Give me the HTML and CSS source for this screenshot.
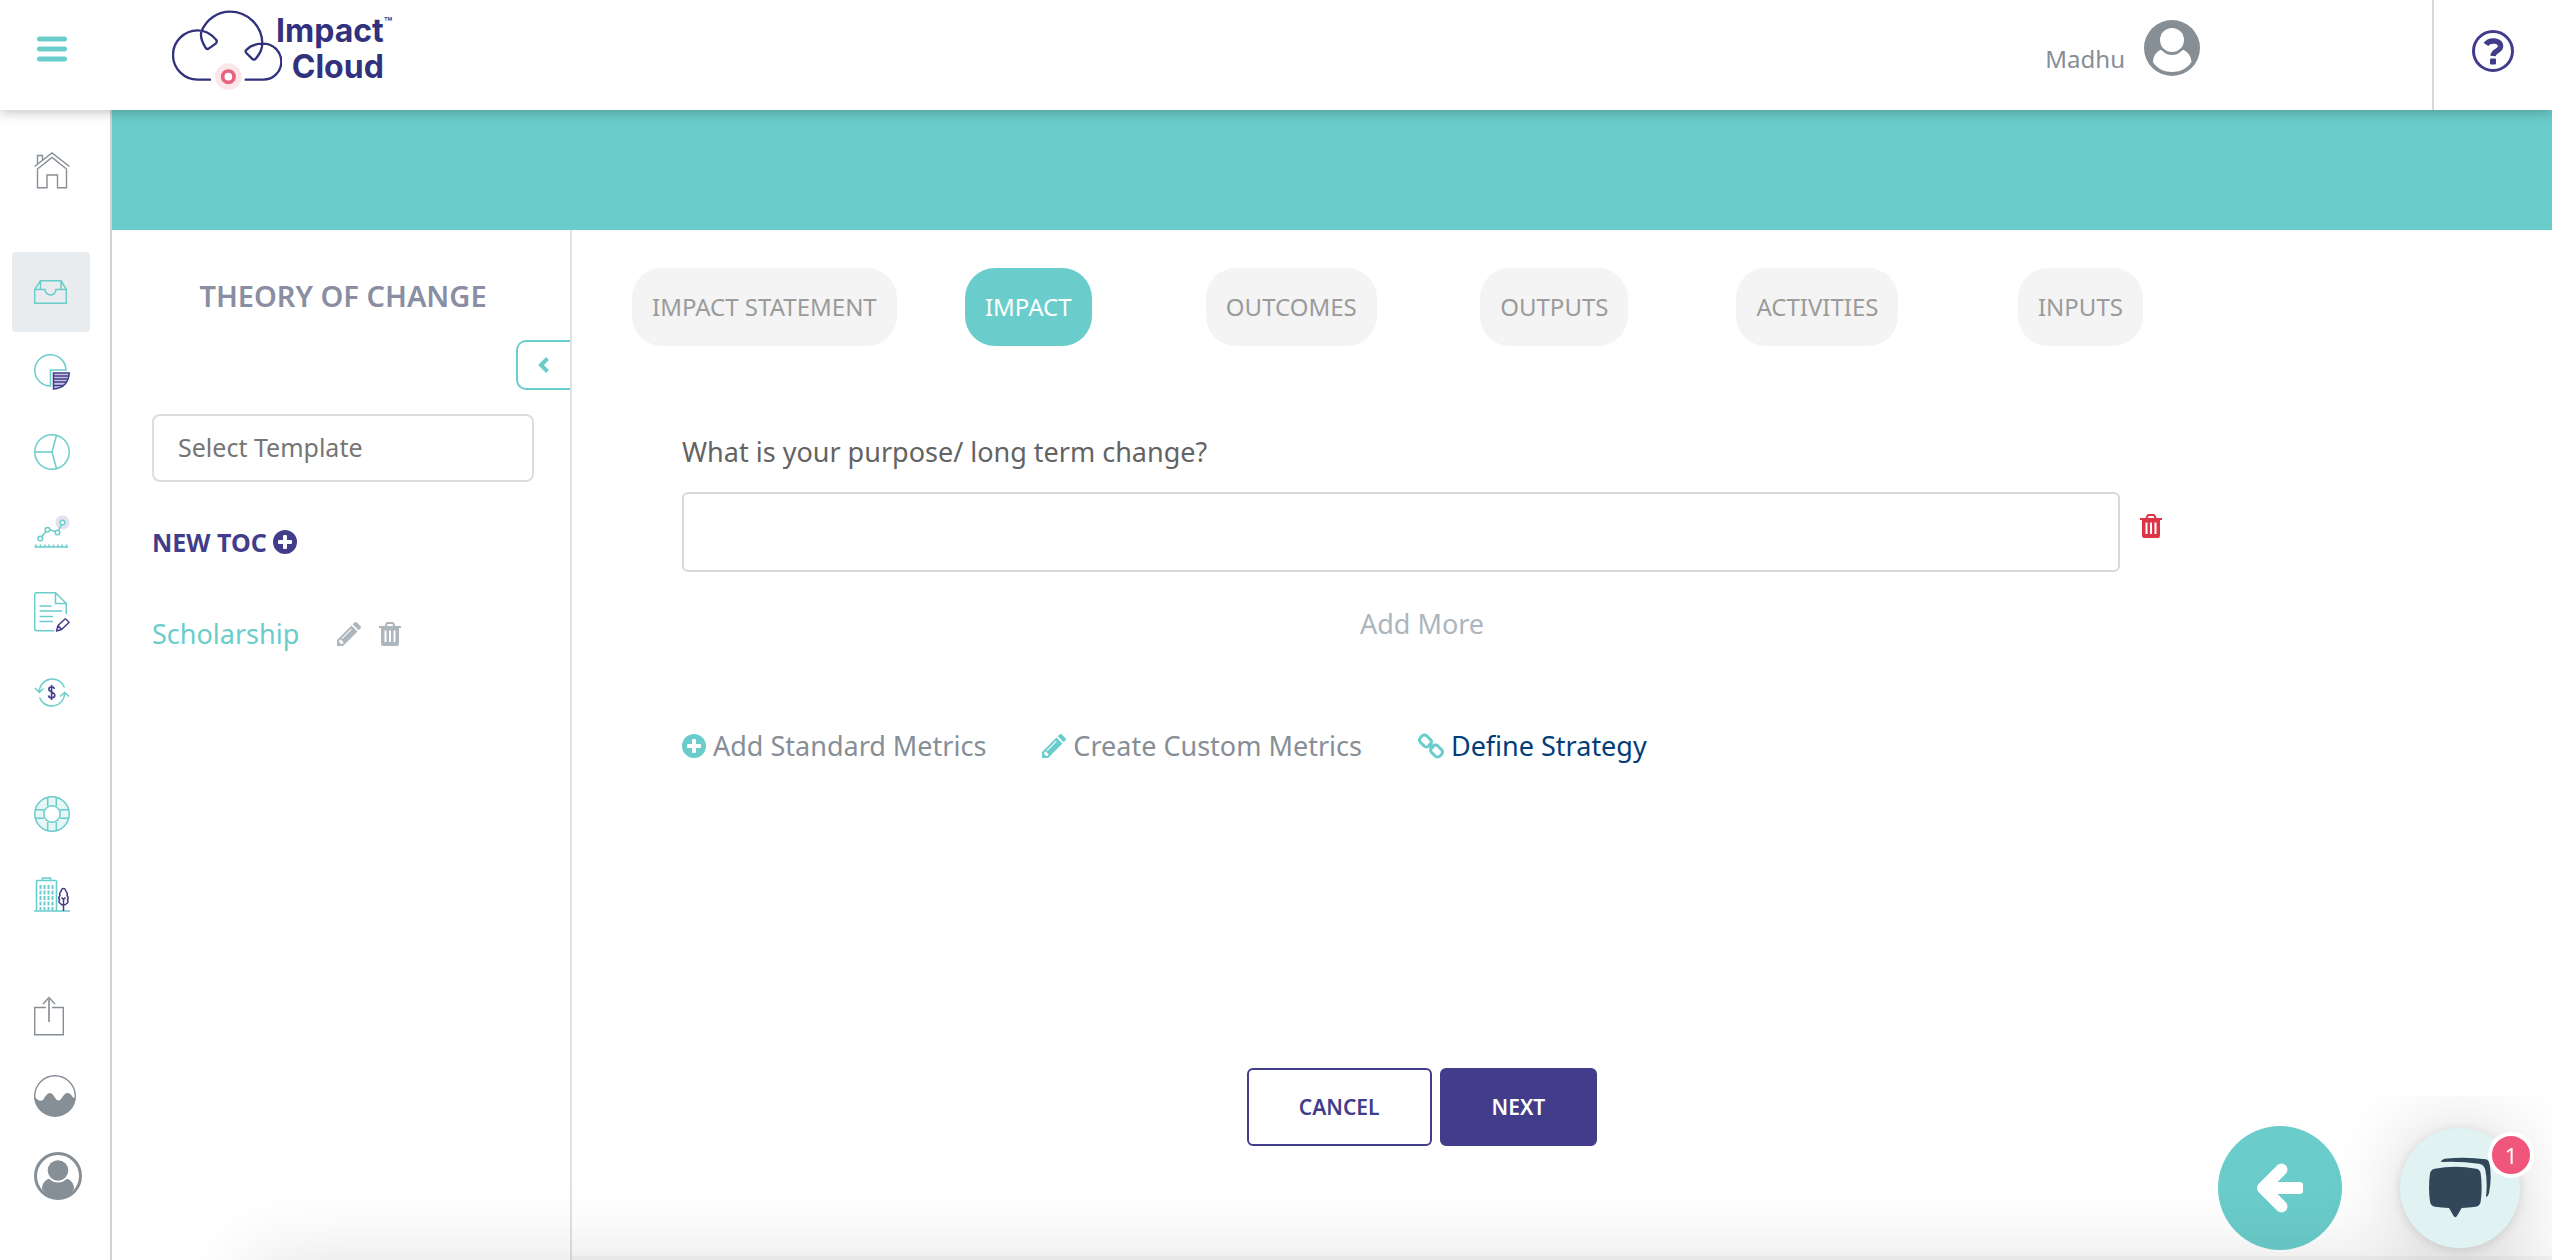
FILE: index.html
```html
<!DOCTYPE html>
<html lang="en">
<head>
<meta charset="utf-8">
<meta name="viewport" content="width=device-width, initial-scale=1">
<title>Impact Cloud - Theory of Change</title>
<link rel="stylesheet" href="styles.css">
</head>
<body>
<svg class="sprite" aria-hidden="true">
  <symbol id="plus-circle" viewBox="0 0 24 24"><path fill="currentColor" fill-rule="evenodd" d="M12 0a12 12 0 1 0 0 24a12 12 0 1 0 0-24zM11 5h2a1 1 0 0 1 1 1v4h4a1 1 0 0 1 1 1v2a1 1 0 0 1-1 1h-4v4a1 1 0 0 1-1 1h-2a1 1 0 0 1-1-1v-4H6a1 1 0 0 1-1-1v-2a1 1 0 0 1 1-1h4V6a1 1 0 0 1 1-1z"/></symbol>
  <symbol id="pencil" viewBox="0 0 24 24"><path fill="currentColor" fill-rule="evenodd" d="M0 24v-6L14.500 3.500l6 6L6 24zM2 19v1.500h1.500V22H5.200l1.500-1.500l-3.200-3.200zM4.600 16.200l.7.7l9.400-9.400l-.7-.7z"/><path fill="currentColor" d="M15.700 2.300L17.500.6q1.200-1.200 2.400 0L23.400 4.100q1.200 1.200 0 2.400L21.700 8.300z"/></symbol>
  <symbol id="trash" viewBox="0 0 22 24"><path fill="currentColor" fill-rule="evenodd" d="M0 4h5.500l1.200-2.700Q7.300 0 8.700 0h4.600q1.400 0 2 1.300L16.500 4H22v2h-2v15.500q0 2.500-2 2.500H4q-2 0-2-2.500V6H0zM7.600 4h6.800l-.9-1.700q-.2-.3-.6-.3H9.100q-.4 0-.6.3zM5.500 8.500v11.500h2V8.500zM10 8.500v11.500h2V8.500zM14.500 8.500v11.500h2V8.500z"/></symbol>
</svg>

<header class="topbar">
  <div class="menu-cell">
    <button class="icon-btn" aria-label="Toggle menu">
      <svg width="30" height="26" viewBox="0 0 30 26"><path d="M2.500 3h25M2.500 13h25M2.500 23h25" stroke="#6acdcb" stroke-width="5" stroke-linecap="round"/></svg>
    </button>
  </div>
  <a class="logo" href="#" aria-label="Impact Cloud home">
    <svg width="110" height="80" viewBox="516 30 330 240" fill="none">
      <path d="M630 239H593A74 74 0 0 1 593 91C616 91 635 103 649 120Q652 124 648 130L626 146Q620 149 616 142C606 126 600 112 604 95C620 55 655 35 690 35A97 97 0 0 1 787 130C787 150 778 164 767 176Q762 182 756 176L739 159Q734 153 740 149C752 136 770 131 790 131A54 54 0 0 1 790 239H737" stroke="#31317d" stroke-width="7" stroke-linecap="round" stroke-linejoin="round"/>
      <circle cx="685" cy="230" r="40" fill="#fbe6ea"/>
      <circle cx="685" cy="230" r="17" fill="#fff" stroke="#e8637f" stroke-width="11"/>
    </svg>
    <span class="logo-name">Impact<br>Cloud</span><span class="logo-tm">™</span>
  </a>
  <a class="user" href="#">
    <span>Madhu</span>
    <svg width="56" height="56" viewBox="0 0 56 56">
      <circle cx="28" cy="28" r="28" fill="#868e96"/>
      <path d="M9 42Q9 34 16 30H40Q47 34 47.500 42C43 49 35 52 28 52S13 49 9 42z" fill="#fff"/>
      <ellipse cx="28" cy="20.500" rx="14" ry="14.500" fill="#868e96"/>
      <circle cx="28" cy="20" r="12" fill="#fff"/>
    </svg>
  </a>
  <div class="help-cell">
    <button class="icon-btn" aria-label="Help">
      <svg width="42" height="42" viewBox="0 0 42 42"><circle cx="21" cy="21" r="19.500" fill="none" stroke="#423d8b" stroke-width="3"/><path d="M14 14.500C17 9.500 29 9.500 28.500 16.500C28 21.500 21.500 20.500 21 26" fill="none" stroke="#423d8b" stroke-width="5.500"/><rect x="18" y="28.500" width="6" height="6" rx="1" fill="#423d8b"/></svg>
    </button>
  </div>
</header>

<div class="shell">
  <nav class="rail" aria-label="Main">
    <div class="rail-group">
      <a class="rail-item" href="#" aria-label="Home"><svg width="36" height="37" viewBox="0 0 36 37" fill="none" stroke="#868e96" stroke-width="1.400"><path d="M.5 14.500L18 1L35.500 14.500M3.500 17v18.800H13V23h10.500v12.800h9V17L18 5.500zM3.500 12V3.500H8.500V8"/></svg></a>
    </div>
    <div class="rail-group">
      <a class="rail-item is-active" href="#" aria-label="Theory of Change"><svg width="33" height="24" viewBox="0 0 33 24" fill="none" stroke="#6acdcb" stroke-width="1.500"><path d="M.7 9.500V23.300H32.300V9.500L27 .7H6.500L.7 9.500H11A5.500 5.500 0 0 0 22 9.500H32.300M6.500.7V9.500M27 .7V9.500"/></svg></a>
      <a class="rail-item" href="#" aria-label="Metrics"><svg width="36" height="36" viewBox="0 0 36 36" fill="none"><path d="M32 16A15.600 15.600 0 1 0 16.500 32V16z" stroke="#6acdcb" stroke-width="1.500"/><path d="M19.500 19H35.300Q34 34 19.500 35z" fill="#c9c6e2" stroke="#423d8b" stroke-width="1.500"/><path d="M19.500 22H35M19.500 25H34M19.500 28H33M19.500 31.500H30" stroke="#423d8b" stroke-width="1.300"/></svg></a>
      <a class="rail-item" href="#" aria-label="Segments"><svg width="36" height="36" viewBox="0 0 36 36" fill="none" stroke="#6acdcb" stroke-width="1.500"><circle cx="18" cy="18" r="17.200"/><path d="M.8 18H18L22.500 1.500M18 18L22.500 34.500"/></svg></a>
      <a class="rail-item" href="#" aria-label="Trends"><svg width="36" height="34" viewBox="0 0 36 34" fill="none"><circle cx="28.500" cy="7.500" r="7" fill="#e3e1ee"/><path d="M7.800 21.500L12 16.500M15.500 14.800L21 16.500M24.500 15.500L27.500 9.500M.5 32H34M2 29.500V32M6.500 29.500V32M11 29.500V32M15 29.500V32M19.500 29.500V32M24 29.500V32M28 29.500V32M32.500 29.500V32" stroke="#6acdcb" stroke-width="1.500"/><g stroke="#6acdcb" stroke-width="1.500" fill="#fff"><circle cx="6.300" cy="23.500" r="2.300"/><circle cx="13.500" cy="14.800" r="2.300"/><circle cx="23.500" cy="17.500" r="2.300"/><circle cx="28.500" cy="7.500" r="2.300"/></g></svg></a>
      <a class="rail-item" href="#" aria-label="Reports"><svg width="36" height="40" viewBox="0 0 36 40" fill="none"><path d="M20 38.700H3Q.7 38.700.7 36.500V3Q.7.7 3 .7H21.500L32.300 11.500V22M21.500.7V11.500H32.300M5.500 14H17.500M5.500 19H28M5.500 24.500H19M5.500 29.500H19" stroke="#6acdcb" stroke-width="1.500"/><path d="M22.500 39L24 33.500L31 27Q32 26.500 35 30.500L27.500 37.500zM24 33.500L27.500 37.500" stroke="#423d8b" stroke-width="1.500" stroke-linejoin="round"/></svg></a>
      <a class="rail-item" href="#" aria-label="Funding"><svg width="36" height="29" viewBox="0 0 36 29" fill="none"><path d="M5.300 14A13 13 0 0 1 30.500 9.500M1 10L5.300 14.500L9.500 10.500M5.500 19.500A13 13 0 0 0 30.700 15.500M26 18.500L30.700 14.500L35 18.500" stroke="#6acdcb" stroke-width="1.500"/><path d="M20.500 10.800C20 8.300 14.800 8.500 14.800 11.300C14.800 14.800 20.800 13.500 20.800 17.300C20.800 20.500 15 20.500 14.500 17.500M17.600 7V22" stroke="#423d8b" stroke-width="1.600"/></svg></a>
    </div>
    <div class="rail-group">
      <a class="rail-item" href="#" aria-label="Support"><svg width="36" height="36" viewBox="0 0 36 36" fill="none" stroke="#6acdcb" stroke-width="1.500"><circle cx="18" cy="18" r="12.500" stroke="#e5f6f5" stroke-width="9"/><path d="M13.700 1v9M22.300 1v9M13.700 26v9M22.300 26v9M1 13.700h9M1 22.300h9M26 13.700h9M26 22.300h9"/><circle cx="18" cy="18" r="17.200"/><circle cx="18" cy="18" r="8.200" fill="#fff"/></svg></a>
      <a class="rail-item" href="#" aria-label="Organization"><svg width="36" height="35" viewBox="0 0 36 35" fill="none"><path d="M2.500 34V4.500Q2.500 3.500 3.500 3.500H21.500Q22.500 3.500 22.500 4.500V34M8.500 3.500V1H16.500V3.500M0 34H36" stroke="#6acdcb" stroke-width="1.600"/><path d="M6.500 8V33M10.500 8V33M14.500 8V33M18.500 8V33" stroke="#6acdcb" stroke-width="2" stroke-dasharray="4 1.500"/><path d="M29.500 34V22M27.500 20.500L29.500 22.500L31.500 20.500M29.500 27.500Q27.500 28.500 26.500 26.500Q24 25.500 25.500 23Q24 20.500 26 18.500Q25 16 27 14.500Q27.500 11.500 29.500 11.500Q31.500 11.500 32 14.500Q34 16 33 18.500Q35 20.500 33.500 23Q35 25.500 32.500 26.500Q31.500 28.500 29.500 27.500z" stroke="#423d8b" stroke-width="1.500"/></svg></a>
    </div>
    <div class="rail-group">
      <a class="rail-item" href="#" aria-label="Share"><svg width="30" height="40" viewBox="0 0 30 40" fill="none" stroke="#868e96"><path d="M12 11.500H.7V38.800H29.300V11.500H18M9 8L15 1.500L21 8" stroke-width="1.400"/><path d="M15 2V26" stroke="#9aa1a8" stroke-width="2"/></svg></a>
      <a class="rail-item" href="#" aria-label="Landscape"><svg width="42" height="42" viewBox="0 0 42 42"><circle cx="21" cy="21" r="20.300" fill="none" stroke="#868e96" stroke-width="1.400"/><path d="M.5 21.500Q5 27.500 9 25Q13 18 15.500 18Q18.500 18 20.500 22Q24.500 29 28.500 22Q31 18 33.500 18Q36.500 18 38.500 22L41.500 23.500A20.700 20.700 0 0 1 .5 23z" fill="#868e96"/></svg></a>
      <a class="rail-item" href="#" aria-label="Account"><svg width="48" height="48" viewBox="0 0 48 48"><circle cx="24" cy="24" r="22.500" fill="#fff" stroke="#868e96" stroke-width="3"/><path d="M8 37Q8 30 14 27H34Q40 30 40 37Q34 47 24 47T8 37z" fill="#868e96"/><circle cx="24" cy="18.500" r="12" fill="#fff"/><circle cx="24" cy="18.500" r="10.300" fill="#868e96"/></svg></a>
    </div>
  </nav>

  <div class="page">
    <div class="banner"></div>
    <div class="columns">
      <aside class="panel">
        <h1 class="panel-title">THEORY OF CHANGE</h1>
        <button class="collapse" aria-label="Collapse panel">
          <svg width="12" height="18" viewBox="0 0 12 18"><path d="M9.500 2.500L3 9L9.500 15.500" fill="none" stroke="#6acdcb" stroke-width="4"/></svg>
        </button>
        <input class="template" type="text" placeholder="Select Template" aria-label="Select Template">
        <button class="new-toc">NEW TOC <svg width="24" height="24"><use href="#plus-circle"/></svg></button>
        <div class="toc-row">
          <a class="toc-link" href="#">Scholarship</a>
          <button class="icon-btn" aria-label="Edit Scholarship"><svg width="24" height="24"><use href="#pencil"/></svg></button>
          <button class="icon-btn" aria-label="Delete Scholarship"><svg width="22" height="24"><use href="#trash"/></svg></button>
        </div>
      </aside>

      <main class="main">
        <nav class="tabs" aria-label="Steps">
          <a class="tab" href="#">IMPACT STATEMENT</a>
          <a class="tab is-current" href="#" aria-current="step">IMPACT</a>
          <a class="tab" href="#">OUTCOMES</a>
          <a class="tab" href="#">OUTPUTS</a>
          <a class="tab" href="#">ACTIVITIES</a>
          <a class="tab" href="#">INPUTS</a>
        </nav>
        <form class="form">
          <label class="question" for="purpose">What is your purpose/ long term change?</label>
          <div class="field-row">
            <input class="field" id="purpose" type="text">
            <button class="icon-btn delete" type="button" aria-label="Delete"><svg width="22" height="24"><use href="#trash"/></svg></button>
          </div>
          <button class="add-more" type="button">Add More</button>
          <div class="metrics">
            <a class="metric" href="#"><svg width="24" height="24"><use href="#plus-circle"/></svg>Add Standard Metrics</a>
            <a class="metric" href="#"><svg width="24" height="24"><use href="#pencil"/></svg>Create Custom Metrics</a>
            <a class="metric is-strong" href="#"><svg width="26" height="26" viewBox="0 0 26 26" fill="none" stroke="currentColor" stroke-width="3"><rect x="1.500" y="3.500" width="12" height="9" rx="3.500" transform="rotate(45 7.500 8)"/><rect x="12.500" y="13.500" width="12" height="9" rx="3.500" transform="rotate(45 18.500 18)"/><path d="M10.500 10.500L15.500 15.500"/></svg>Define Strategy</a>
          </div>
          <div class="actions">
            <button class="btn btn-outline" type="button">CANCEL</button>
            <button class="btn btn-solid" type="button">NEXT</button>
          </div>
        </form>
      </main>
    </div>
  </div>
</div>

<button class="back" aria-label="Back">
  <svg width="46" height="50" viewBox="0 0 46 50" fill="none" stroke="#fff" stroke-linecap="round" stroke-linejoin="round"><path d="M24.500 6.500L6 25L24.500 43.500" stroke-width="12"/><path d="M9 25H42" stroke-width="8"/><rect x="12" y="21" width="32" height="8" rx="1" fill="#fff" stroke-width="4"/></svg>
</button>
<div class="bottom-shade"></div>
<div class="chat-area">
  <button class="chat" aria-label="Open chat">
    <svg width="64" height="62" viewBox="745 288 192 186" fill="#33475b"><path d="M765 326Q827 314 890 326Q901 328 903 340Q909 382 903 425Q900 438 888 440Q868 443 846 444L832 468Q827 475 822 468L808 444Q785 443 766 440Q754 438 751 425Q745 382 751 340Q754 328 765 326z"/><path d="M783 306Q786 298 795 296Q860 289 918 298Q928 300 930 312Q937 355 928 400Q926 409 919 411Q924 365 917 330Q914 314 898 311Q840 303 783 306z"/></svg>
    <span class="chat-count">1</span>
  </button>
</div>
</body>
</html>
```
FILE: styles.css
```css
:root {
  --teal: #6acdcb;
  --indigo: #423d8b;
  --grey: #868e96;
  --light-grey: #adb5bd;
  --top-height: 110px;
}

* { box-sizing: border-box; }

body {
  margin: 0;
  background: #fff;
  color: #636363;
  font: 27px/40px "Noto Sans", sans-serif;
}

a { color: inherit; text-decoration: none; }
svg { display: block; flex: none; }
button { font: inherit; cursor: pointer; }
.sprite { position: absolute; width: 0; height: 0; }

.icon-btn {
  padding: 0;
  border: 0;
  background: none;
  color: var(--light-grey);
}

/* Top bar */
.topbar {
  position: relative;
  z-index: 2;
  display: flex;
  height: var(--top-height);
  background: #fff;
  box-shadow: 0 2px 12px rgba(0, 0, 0, .25);
}

.menu-cell {
  display: flex;
  align-items: flex-start;
  width: 172px;
  padding: 36px 0 0 37px;
}

.logo {
  display: flex;
  align-items: flex-start;
  padding-top: 10px;
  color: #31317d;
}

.logo-name {
  margin: 3px 0 0 -6px;
  font: 700 32px/36px Inter, sans-serif;
  text-align: right;
}

.logo-tm {
  margin-top: 5px;
  font: 500 14px/16px Inter, sans-serif;
}

.user {
  display: flex;
  align-items: flex-start;
  gap: 19px;
  margin: 20px 232px 0 auto;
  color: var(--grey);
  font-size: 24px;
}

.user span { margin-top: 19px; }

.help-cell {
  display: flex;
  align-items: flex-start;
  width: 120px;
  padding: 30px 0 0 38px;
  border-left: 2px solid #d8d8d8;
}

/* Shell */
.shell {
  display: flex;
  min-height: calc(100vh - var(--top-height));
}

.rail {
  flex: none;
  display: flex;
  flex-direction: column;
  gap: 42px;
  width: 112px;
  padding: 20px 20px 40px 12px;
  border-right: 2px solid #ced4da;
}

.rail-item {
  display: flex;
  align-items: center;
  height: 80px;
  padding-left: 22px;
  border-radius: 4px;
}

.rail-item.is-active { background: #e9ecef; }

.page {
  flex: 1;
  display: flex;
  flex-direction: column;
}

.banner {
  height: 120px;
  background: var(--teal);
}

.columns {
  flex: 1;
  display: flex;
}

/* Side panel */
.panel {
  flex: none;
  display: flex;
  flex-direction: column;
  align-items: flex-start;
  width: 460px;
  padding: 46px 36px 0 40px;
  border-right: 2px solid #dee2e6;
}

.panel-title {
  align-self: stretch;
  margin: 0 0 24px;
  color: #8a8ea3;
  font-size: 29px;
  font-weight: 600;
  line-height: 40px;
  text-align: center;
}

.collapse {
  display: flex;
  align-items: center;
  align-self: flex-end;
  width: 54px;
  height: 50px;
  margin-right: -36px;
  padding: 0 0 0 20px;
  border: 2px solid var(--teal);
  border-right: 0;
  border-radius: 10px 0 0 10px;
  background: #fff;
}

.template {
  width: 100%;
  height: 68px;
  margin: 24px 0 40px;
  padding: 0 24px 2px;
  border: 2px solid #ddd;
  border-radius: 8px;
  font: 25px "Noto Sans", sans-serif;
}

.template::placeholder { color: #757575; }

.new-toc {
  display: flex;
  align-items: center;
  gap: 6px;
  margin-bottom: 52px;
  padding: 0;
  border: 0;
  background: none;
  color: var(--indigo);
  font-size: 25px;
  font-weight: 700;
}

.toc-row {
  display: flex;
  align-items: center;
  gap: 18px;
}

.toc-link {
  margin-right: 20px;
  color: var(--teal);
}

/* Main column */
.main {
  flex: 1;
  padding: 38px 340px 40px 60px;
  border-bottom: 4px solid #f7f7f7;
}

.tabs {
  display: grid;
  grid-template-columns: repeat(6, 1fr);
  justify-items: center;
  margin-bottom: 86px;
}

.tab {
  padding: 19px 20px;
  border-radius: 30px;
  background: #f4f4f4;
  color: #9b9b9b;
  font-size: 24px;
  white-space: nowrap;
}

.tab.is-current {
  background: var(--teal);
  color: #fff;
}

.form {
  display: flex;
  flex-direction: column;
  padding: 0 50px;
}

.question { margin-bottom: 20px; }

.field-row {
  display: flex;
  align-items: center;
  gap: 20px;
}

.field {
  flex: 1;
  min-width: 0;
  height: 80px;
  padding: 0 24px;
  border: 2px solid #d9d9d9;
  border-radius: 6px;
  font: inherit;
}

.delete {
  padding-bottom: 12px;
  color: #dc3545;
}

.add-more {
  align-self: center;
  margin: 32px 0 82px;
  padding: 0;
  border: 0;
  background: none;
  color: var(--light-grey);
}

.metrics {
  display: flex;
  gap: 56px;
}

.metric {
  display: flex;
  align-items: center;
  gap: 7px;
  color: var(--grey);
}

.metric svg { color: var(--teal); }
.metric.is-strong { color: #023d7a; }

.actions {
  display: flex;
  justify-content: center;
  gap: 8px;
  margin-top: 302px;
}

.btn {
  height: 78px;
  padding: 0 50px;
  border: 2px solid var(--indigo);
  border-radius: 6px;
  font-size: 21px;
  font-weight: 600;
}

.btn-outline {
  background: #fff;
  color: var(--indigo);
}

.btn-solid {
  background: var(--indigo);
  color: #fff;
}

/* Floating controls */
.back {
  position: fixed;
  right: 210px;
  bottom: 10px;
  display: flex;
  align-items: center;
  justify-content: center;
  width: 124px;
  height: 124px;
  padding: 0;
  border: 0;
  border-radius: 50%;
  background: var(--teal);
}

.bottom-shade {
  position: fixed;
  top: 100%;
  left: 250px;
  right: 0;
  height: 200px;
  box-shadow: 0 0 80px rgba(0, 0, 0, .12);
  pointer-events: none;
}

.chat-area {
  position: fixed;
  right: 0;
  bottom: 0;
  width: 240px;
  height: 164px;
  padding: 32px 0 0 88px;
  overflow: hidden;
}

.chat {
  position: relative;
  display: flex;
  width: 120px;
  height: 120px;
  padding: 28px 0 0 28px;
  border: 0;
  border-radius: 50%;
  background: #e0f3f2;
  box-shadow: 0 2px 12px rgba(0, 0, 0, .12), 0 2px 80px rgba(0, 0, 0, .18);
}

.chat-count {
  position: absolute;
  top: 4px;
  right: -14px;
  width: 46px;
  height: 46px;
  border: 4px solid #fff;
  border-radius: 50%;
  background: #f0557c;
  color: #fff;
  font-size: 22px;
  line-height: 38px;
  text-align: center;
}
```
